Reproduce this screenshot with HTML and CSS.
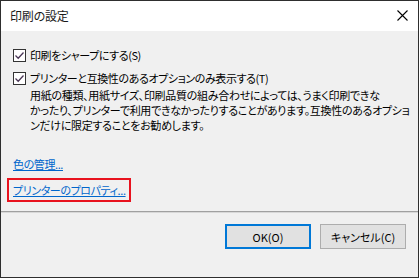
FILE: index.html
```html
<!DOCTYPE html>
<html lang="ja">
<head>
    <meta charset="UTF-8">
    <meta name="viewport" content="width=device-width, initial-scale=1.0">
    <title>印刷の設定</title>
    <link rel="stylesheet" href="styles.css">
</head>
<body>
    <div class="window">
        <!-- タイトルバー -->
        <div class="titlebar">
            <span class="title">印刷の設定</span>
            <svg class="close" width="11" height="11" viewBox="0 0 11 11">
                <path d="M0.5 0.5L10.5 10.5M10.5 0.5L0.5 10.5" stroke="#000" stroke-width="1.1" fill="none"/>
            </svg>
        </div>

        <div class="content">
            <label class="check">
                <span class="box"><svg width="11" height="11" viewBox="0 0 11 11"><path d="M1.5 5.5L4.2 8.2L9.5 2.5" stroke="#4a3656" stroke-width="1.3" fill="none"/></svg></span>
                <span>印刷をシャープにする(S)</span>
            </label>
            <label class="check">
                <span class="box"><svg width="11" height="11" viewBox="0 0 11 11"><path d="M1.5 5.5L4.2 8.2L9.5 2.5" stroke="#4a3656" stroke-width="1.3" fill="none"/></svg></span>
                <span>プリンターと互換性のあるオプションのみ表示する(T)</span>
            </label>
            <p class="note">用紙の種類、用紙サイズ、印刷品質の組み合わせによっては、うまく印刷できな<br>かったり、プリンターで利用できなかったりすることがあります。互換性のあるオプショ<br>ンだけに限定することをお勧めします。</p>

            <div class="links">
                <a class="link" href="#">色の管理...</a>
                <span class="marked"><a class="link" href="#">プリンターのプロパティ...</a></span>
            </div>
        </div>

        <div class="footer">
            <button class="btn btn_default">OK(O)</button>
            <button class="btn">キャンセル(C)</button>
        </div>
    </div>
</body>
</html>
```

FILE: styles.css
```css
/* ダイアログ全体 */
body{
    margin: 0;
    font-family: "Noto Sans CJK JP", "Noto Sans", sans-serif;
    font-size: 11px;
    letter-spacing: -0.4px;
    font-feature-settings: "palt";
    color: #000;
}
.window{
    width: 419px;
    height: 278px;
    box-sizing: border-box;
    border: 1px solid #2e2e2e;
    background: #f0f0f0;
    display: flex;
    flex-direction: column;
}

/* タイトルバー */
.titlebar{
    height: 30px;
    flex: none;
    background: #fff;
    display: flex;
    align-items: center;
    justify-content: space-between;
    padding: 0 10px 0 9px;
}
.title{
    font-size: 12px;
    letter-spacing: -0.2px;
    line-height: 16px;
    color: #1a1a1a;
}
.close{
    display: block;
    margin-top: -1px;
}

/* 本文 */
.content{
    flex: 1;
    padding: 16px 12px 0 12px;
}
.check{
    display: flex;
    align-items: center;
    gap: 4px;
    height: 16px;
    line-height: 16px;
    margin-bottom: 7px;
}
.box{
    width: 11px;
    height: 11px;
    border: 1px solid #333;
    background: #fff;
    flex: none;
}
.box svg{
    display: block;
}
.note{
    margin: -5px 0 0 17px;
    line-height: 15px;
    letter-spacing: -0.3px;
    white-space: nowrap;
}

/* リンク */
.links{
    margin-top: 23px;
    display: flex;
    flex-direction: column;
    align-items: flex-start;
    gap: 6px;
}
.link{
    color: #0066cc;
    text-decoration: underline;
    line-height: 16px;
}
.marked{
    border: 2px solid #e8121e;
    padding: 2px 3px 2px 4px;
    margin-left: -6px;
}

/* ボタン */
.footer{
    height: 53px;
    flex: none;
    border-top: 1px solid #a0a0a0;
    box-shadow: inset 0 1px 0 #d8d8d8;
    display: flex;
    justify-content: flex-end;
    align-items: flex-start;
    gap: 9px;
    padding: 12px 12px 0 0;
}
.btn{
    width: 86px;
    height: 25px;
    font: inherit;
    background: #e1e1e1;
    border: 1px solid #adadad;
    padding: 0;
    color: #000;
}
.btn_default{
    border: 2px solid #0078d7;
}
```
